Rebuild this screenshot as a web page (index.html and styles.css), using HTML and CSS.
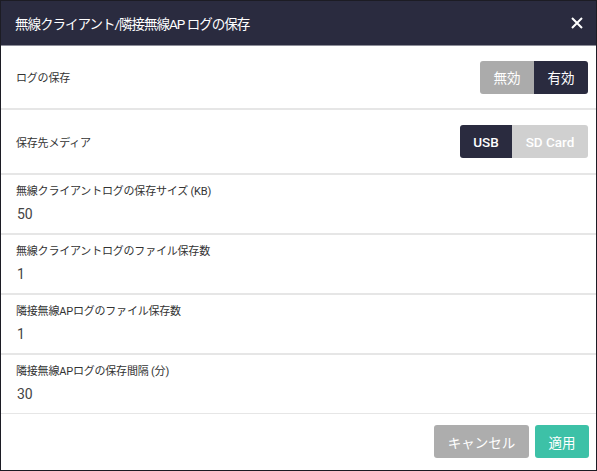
FILE: index.html
```html
<!DOCTYPE html>
<html lang="ja">
<head>
<meta charset="utf-8">
<title>ログの保存</title>
<link rel="stylesheet" href="styles.css">
</head>
<body>
<div class="dialog">
  <div class="header">
    <div class="title">無線クライアント/隣接無線AP ログの保存</div>
    <button class="close" aria-label="close">
      <svg width="12" height="12" viewBox="0 0 12 12"><path d="M1 1 L11 11 M11 1 L1 11" stroke="#fff" stroke-width="2" fill="none"/></svg>
    </button>
  </div>
  <div class="body">
    <div class="row row-toggle">
      <div class="label">ログの保存</div>
      <div class="seg">
        <span class="seg-btn off">無効</span><span class="seg-btn on">有効</span>
      </div>
    </div>
    <div class="row row-toggle row-media">
      <div class="label">保存先メディア</div>
      <div class="seg">
        <span class="seg-btn on usb">USB</span><span class="seg-btn light sd">SD Card</span>
      </div>
    </div>
    <div class="row row-field">
      <div class="label">無線クライアントログの保存サイズ (KB)</div>
      <div class="value">50</div>
    </div>
    <div class="row row-field">
      <div class="label">無線クライアントログのファイル保存数</div>
      <div class="value">1</div>
    </div>
    <div class="row row-field">
      <div class="label">隣接無線APログのファイル保存数</div>
      <div class="value">1</div>
    </div>
    <div class="row row-field last">
      <div class="label">隣接無線APログの保存間隔 (分)</div>
      <div class="value">30</div>
    </div>
  </div>
  <div class="footer">
    <button class="btn cancel">キャンセル</button>
    <button class="btn apply">適用</button>
  </div>
</div>
</body>
</html>
```
FILE: styles.css
```css
* { box-sizing: border-box; }
html, body { margin: 0; padding: 0; background: #fff; }
body { font-family: Roboto, "Noto Sans CJK JP", sans-serif; }

.dialog {
  width: 597px;
  height: 471px;
  border: 1px solid #1c1c24;
  display: flex;
  flex-direction: column;
  background: #fff;
}

.header {
  height: 45px;
  flex: none;
  background: #2a2b3f;
  border-bottom: 1px solid #8d8e99;
  display: flex;
  align-items: center;
  justify-content: space-between;
  padding: 0 8px 0 14px;
}
.title {
  color: #fff;
  font-size: 13.5px;
  font-weight: 400;
  letter-spacing: -1px;
}
.close {
  background: none;
  border: 0;
  padding: 0;
  width: 22px;
  height: 22px;
  display: flex;
  align-items: center;
  justify-content: center;
  cursor: pointer;
}

.body { flex: none; display: flex; flex-direction: column; }
.row {
  border-bottom: 2px solid #e6e6e6;
  padding: 0 8px 0 15px;
}
.row.last { border-bottom: 1px solid #e6e6e6; }

.label {
  font-size: 11px;
  color: #333;
  letter-spacing: -0.2px;
}
.row-toggle {
  height: 64px;
  display: flex;
  align-items: center;
  justify-content: space-between;
}
.row-media { height: 65px; }
.row-field {
  height: 60px;
  display: flex;
  flex-direction: column;
  padding-top: 7px;
  gap: 8px;
}
.row-field.last { height: 59px; }
.value {
  font-size: 14px;
  color: #444;
  padding-left: 1px;
}

.seg { display: flex; }
.seg-btn {
  height: 33px;
  display: flex;
  align-items: center;
  justify-content: center;
  color: #fff;
  font-size: 13.5px;
}
.seg-btn:first-child { border-radius: 3px 0 0 3px; }
.seg-btn:last-child { border-radius: 0 3px 3px 0; }
.seg-btn.off { background: #ababab; width: 54px; }
.seg-btn.on { background: #2a2b3f; width: 54px; }
.seg-btn.usb { width: 52px; font-weight: 500; }
.seg-btn.light { background: #d0d0d0; }
.seg-btn.sd { width: 76px; font-weight: 500; }

.footer {
  flex: 1;
  display: flex;
  justify-content: flex-end;
  align-items: flex-start;
  gap: 6px;
  padding: 11px 7px 0 0;
}
.btn {
  height: 33px;
  border: 0;
  border-radius: 3px;
  color: #fff;
  font-family: Roboto, "Noto Sans CJK JP", sans-serif;
  font-size: 13.5px;
  padding: 0;
}
.btn.cancel { background: #adadad; width: 95px; }
.btn.apply { background: #3dc1a7; width: 54px; }
```
